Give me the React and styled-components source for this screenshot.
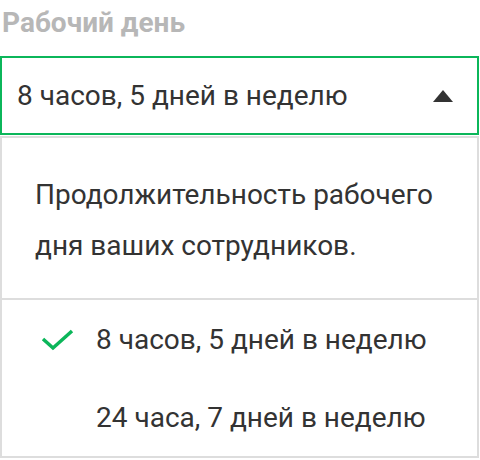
import React from 'react'
import styled, { createGlobalStyle } from 'styled-components'

const GlobalStyle = createGlobalStyle`
    html, body {
        margin: 0;
        padding: 0;
        background: #fff;
    }
    body {
        font-family: Roboto, "Noto Sans", "Liberation Sans", sans-serif;
    }
`

const Wrapper = styled.div`
    width: 479px;
`

const Label = styled.div`
    height: 56px;
    padding: 7px 0 0 2px;
    box-sizing: border-box;
    font-size: 28px;
    font-weight: 700;
    line-height: 32px;
    color: #b7b7b7;
`

const Select = styled.div`
    height: 79px;
    box-sizing: border-box;
    border: 2px solid #0bb65a;
    padding: 0 24px 0 15px;
    display: flex;
    align-items: center;
    justify-content: space-between;
    font-size: 28px;
    color: #333;
`

const Arrow = styled.span`
    width: 0;
    height: 0;
    border-left: 10px solid transparent;
    border-right: 10px solid transparent;
    border-bottom: 12px solid #333;
`

const Dropdown = styled.div`
    margin-top: 1px;
    border: 2px solid #dddddd;
    box-sizing: border-box;
`

const Hint = styled.div`
    padding: 31px 33px 27px;
    border-bottom: 2px solid #dddddd;
    font-size: 28px;
    line-height: 51px;
    color: #333;
`

const Option = styled.div`
    height: 78px;
    padding-top: 1px;
    box-sizing: border-box;
    display: flex;
    align-items: center;
    padding-left: 38px;
    font-size: 28px;
    color: #333;
`

const Check = styled.span`
    width: 56px;
    display: flex;
    align-items: center;
`

function App() {
    const options = [
        { label: '8 часов, 5 дней в неделю', selected: true },
        { label: '24 часа, 7 дней в неделю', selected: false },
    ]

    return (
        <Wrapper>
            <GlobalStyle />
            <Label>Рабочий день</Label>
            <Select>
                <span>8 часов, 5 дней в неделю</span>
                <Arrow />
            </Select>
            <Dropdown>
                <Hint>
                    Продолжительность рабочего<br />
                    дня ваших сотрудников.
                </Hint>
                { options.map((item, index) =>
                    <Option key={index}>
                        <Check>
                            { item.selected &&
                                <svg width="34" height="22" viewBox="0 0 34 22">
                                    <path d="M3 10 L13 19 L32 2" fill="none" stroke="#0bb65a" strokeWidth="3.5" />
                                </svg>
                            }
                        </Check>
                        { item.label }
                    </Option>
                ) }
            </Dropdown>
        </Wrapper>
    )
}

export default App
